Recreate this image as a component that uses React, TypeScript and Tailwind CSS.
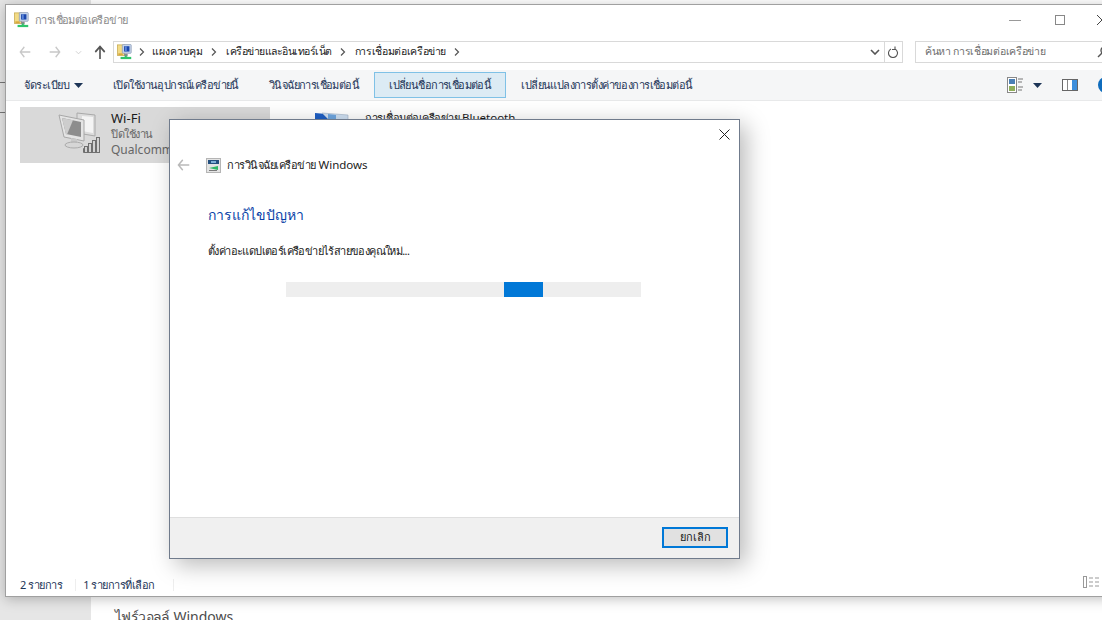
import React from "react";

const FONT = "font-['Noto_Sans','Liberation_Sans',sans-serif]";

function NetIcon({ size = 18 }: { size?: number }) {
  return (
    <svg width={size} height={size} viewBox="0 0 18 18" className="shrink-0">
      <rect x="0.500" y="1" width="8" height="12" fill="#f2db86" stroke="#c4a648" strokeWidth="0.8" />
      <rect x="1.500" y="10.500" width="5" height="2" fill="#d9a93c" />
      <rect x="6" y="0.500" width="10" height="10" rx="1" fill="#c4d3e8" stroke="#8a99b5" strokeWidth="0.8" />
      <rect x="8" y="2.500" width="6" height="6" fill="#1a46ad" />
      <rect x="9" y="2.500" width="2" height="6" fill="#5b86d8" />
      <rect x="8" y="11" width="4" height="3" fill="#8a8a8a" />
      <rect x="4" y="14.500" width="12" height="2.500" fill="#2ec46a" />
      <rect x="9" y="13" width="2" height="2" fill="#2ec46a" />
    </svg>
  );
}

function ArrowLeft({ color, w = 18 }: { color: string; w?: number }) {
  return (
    <svg width={w} height="12" viewBox="0 0 18 14" fill="none" stroke={color} strokeWidth="1.900" preserveAspectRatio="none" className="shrink-0">
      <path d="M17 7H2M8 1L2 7l6 6" />
    </svg>
  );
}

function Caret() {
  return (
    <svg width="9" height="5" viewBox="0 0 9 5" className="shrink-0">
      <path d="M0 0h9L4.500 5z" fill="#1d3557" />
    </svg>
  );
}

function Chevron() {
  return (
    <svg width="6" height="8" viewBox="0 0 6 8" fill="none" stroke="#555" strokeWidth="1.200" className="shrink-0">
      <path d="M1 0.500L4.500 4 1 7.500" />
    </svg>
  );
}

function WifiPc() {
  return (
    <svg width="46" height="42" viewBox="0 0 46 42" className="shrink-0">
      <path d="M19 1l18 2v21l-18-3z" fill="#dcdcdc" stroke="#a9a9a9" />
      <path d="M24 4l11 1v16l-11-2z" fill="#f4f4f4" />
      <path d="M1 3l25 5v21L6 25z" fill="#e4e4e4" stroke="#a8a8a8" />
      <path d="M4 6l19 4v15L8 22z" fill="#8d8d8d" />
      <path d="M4 6l11 2.300L9 22.500H8z" fill="#cdcdcd" />
      <path d="M13 26l6 1v5h-6z" fill="#c9c9c9" />
      <ellipse cx="16" cy="33" rx="9" ry="3" fill="#d6d6d6" stroke="#ababab" />
      <g fill="#d2d2d2" stroke="#6f6f6f" strokeWidth="1">
        <path d="M25.500 36.500h15v4h-15z" fill="none" />
        <rect x="26.500" y="34.500" width="3" height="6" />
        <rect x="30.500" y="31.500" width="3" height="9" />
        <rect x="34.500" y="28.500" width="3" height="12" />
        <rect x="38.500" y="25.500" width="3" height="15" />
      </g>
    </svg>
  );
}

function BtPc() {
  return (
    <svg width="36" height="14" viewBox="0 0 36 14" className="shrink-0">
      <path d="M1 1l22 2v12H1z" fill="#1f5fc4" />
      <path d="M8 1l26 2v12H22z" fill="#cfe0f3" stroke="#9db0c6" strokeWidth="0.600" />
      <path d="M14 2l8 1v12h-8z" fill="#6ea6e0" />
    </svg>
  );
}

function DiagIcon() {
  return (
    <svg width="15" height="15" viewBox="0 0 15 15" className="shrink-0">
      <rect x="0.500" y="0.500" width="14" height="14" fill="#e4e4e4" stroke="#b5b5b5" />
      <rect x="2" y="2" width="11" height="4" fill="#24507f" />
      <rect x="5" y="3" width="5" height="2" fill="#7fb0d8" />
      <path d="M3 10l9-2v4z" fill="#2fb866" />
      <rect x="3" y="12" width="8" height="1" fill="#7a7a7a" />
    </svg>
  );
}

function Cmd({ label, active }: { label: string; active?: boolean }) {
  return (
    <div
      className={
        "h-[26px] flex items-center px-[14px] whitespace-nowrap border text-[11px] tracking-[-0.58px] " +
        (active ? "bg-[#dcebf4] border-[#7fc1e6]" : "border-transparent")
      }
    >
      {label}
    </div>
  );
}

export default function App() {
  return (
    <div className={`relative w-[1102px] h-[620px] overflow-hidden bg-white ${FONT} text-[#1a1a1a]`}>
      {/* Desktop behind: settings window */}
      <div className="flex h-full">
        <div className="w-[91px] bg-[#e6e6e6]" />
        <div className="flex-1 flex flex-col justify-end pl-[24px] text-[#4b4b4b] text-[14px] leading-[20px]">
          <div className="translate-y-[7px]">
            <span className="tracking-[-0.6px]">ไฟร์วอลล์</span> Windows
          </div>
        </div>
      </div>
      <div className="absolute left-0 top-[82px] w-[5px] h-px bg-[#777]" />
      <div className="absolute left-0 top-[112px] w-[5px] h-px bg-[#777]" />

      {/* Explorer window */}
      <div className="absolute left-[5px] top-[4px] w-[1120px] h-[593px] bg-white border border-[#a0a0a0] shadow-[0_2px_12px_rgba(0,0,0,0.25)] flex flex-col">
        {/* Title */}
        <div className="h-[30px] flex items-center pl-[8px] gap-[5px] relative shrink-0">
          <NetIcon size={16} />
          <span className="text-[11px] tracking-[-0.6px] text-[#8a8a8a]">การเชื่อมต่อเครือข่าย</span>
          <div className="absolute left-[1003px] top-0 h-full flex items-center">
            <div className="w-[12px] h-px bg-[#999]" />
            <div className="ml-[34px] w-[10px] h-[10px] border border-[#888]" />
            <div className="ml-[32px] w-[10px] h-[10px]">
              <svg width="10" height="10" viewBox="0 0 10 10" stroke="#444" fill="none"><path d="M0 0l10 10M10 0L0 10" /></svg>
            </div>
          </div>
        </div>
        {/* Address */}
        <div className="h-[35px] flex items-center shrink-0 pl-[13px] pb-[1px]">
          <ArrowLeft color="#c8c8c8" w={12} />
          <div className="ml-[18px] rotate-180"><ArrowLeft color="#c8c8c8" w={12} /></div>
          <svg width="7" height="5" viewBox="0 0 8 5" fill="none" stroke="#ccc" className="ml-[14px]"><path d="M1 1l3 3 3-3" /></svg>
          <svg width="12" height="14" viewBox="0 0 14 14" fill="none" stroke="#555" strokeWidth="1.900" preserveAspectRatio="none" className="ml-[12px]"><path d="M7 14V2M1.500 7L7 1.500 12.500 7" /></svg>
          <div className="ml-[7px] w-[790px] h-[22px] border border-[#d9d9d9] flex items-center relative">
            <div className="ml-[3px]"><NetIcon size={16} /></div>
            <div className="ml-[6px] mr-[7px]"><Chevron /></div>
            <span className="text-[10.500px] tracking-[-0.1px]">แผงควบคุม</span>
            <div className="ml-[8px] mr-[9px]"><Chevron /></div>
            <span className="text-[10.500px] tracking-[-0.5px]">เครือข่ายและอินเทอร์เน็ต</span>
            <div className="ml-[8px] mr-[9px]"><Chevron /></div>
            <span className="text-[10.500px] tracking-[-0.35px]">การเชื่อมต่อเครือข่าย</span>
            <div className="ml-[8px]"><Chevron /></div>
            <div className="ml-auto flex items-center h-full">
              <svg width="10" height="6" viewBox="0 0 10 6" fill="none" stroke="#555" strokeWidth="1.600" className="mr-[4px]"><path d="M1 1l4 4 4-4" /></svg>
              <div className="w-[18px] h-full border-l border-[#d9d9d9] flex items-center justify-center">
                <svg width="11" height="12" viewBox="0 0 11 12" fill="none" stroke="#555" strokeWidth="1.100"><path d="M3 3a4.500 4.500 0 1 0 4 0M7 0.500V3.500H4" /></svg>
              </div>
            </div>
          </div>
          <div className="ml-[12px] w-[200px] h-[22px] border border-[#d9d9d9] flex items-center pl-[9px]">
            <span className="text-[10.500px] tracking-[-0.3px] text-[#6d6d6d]">ค้นหา การเชื่อมต่อเครือข่าย</span>
            <svg width="12" height="12" viewBox="0 0 12 12" fill="none" stroke="#555" strokeWidth="1.400" className="ml-auto mr-[5px]"><circle cx="7.500" cy="4.500" r="3.500" /><path d="M5 7l-4 4" /></svg>
          </div>
        </div>
        {/* Command bar */}
        <div className="h-[31px] bg-[#f5f6f7] border-b border-[#e8e9ea] flex items-center shrink-0 pl-[4px] text-[#1d3557] relative">
          <div className="flex items-center pl-[14px] pr-[15px] gap-[5px] text-[11px]"><span className="tracking-[-0.5px]">จัดระเบียบ</span> <Caret /></div>
          <Cmd label="เปิดใช้งานอุปกรณ์เครือข่ายนี้" />
          <Cmd label="วินิจฉัยการเชื่อมต่อนี้" />
          <Cmd label="เปลี่ยนชื่อการเชื่อมต่อนี้" active />
          <Cmd label="เปลี่ยนแปลงการตั้งค่าของการเชื่อมต่อนี้" />
          <div className="absolute left-[1001px] top-[7px] flex items-center">
            <svg width="16" height="16" viewBox="0 0 16 16"><rect x="0.500" y="0.500" width="9" height="15" fill="#fff" stroke="#888" /><rect x="2" y="2" width="6" height="5" fill="#4a7fb5" /><rect x="2" y="9" width="6" height="5" fill="#8fae5a" /><path d="M11 2h5M11 5h4M11 10h5M11 13h4" stroke="#777" /></svg>
            <div className="ml-[10px]"><Caret /></div>
            <svg width="16" height="12" viewBox="0 0 16 12" className="ml-[20px]"><rect x="0.500" y="0.500" width="15" height="11" fill="#fff" stroke="#666" /><rect x="10" y="1" width="5" height="10" fill="#3d8fdc" /><rect x="5" y="1" width="1" height="10" fill="#888" /></svg>
            <div className="ml-[20px] w-[16px] h-[16px] rounded-full bg-[#0f6cbd]" />
          </div>
        </div>
        {/* Content */}
        <div className="flex-1 relative pl-[14px] pt-[6px]">
          <div className="w-[250px] h-[56px] bg-[#d9d9d9] flex pl-[38px] pt-[3px]">
            <div className="pt-[2px]"><WifiPc /></div>
            <div className="text-[12px] leading-[16px] pl-[7px]">
              <div className="text-[13px]">Wi-Fi</div>
              <div className="text-[#666] text-[11px] tracking-[-0.5px]">ปิดใช้งาน</div>
              <div className="text-[#666]">Qualcomm</div>
            </div>
          </div>
          <div className="absolute left-[308px] top-[11px] flex gap-[15px]">
            <BtPc />
            <span className="text-[11.500px] leading-[14px] -mt-[1px]">
              <span className="text-[11px] tracking-[-0.5px]">การเชื่อมต่อเครือข่าย</span> Bluetooth
            </span>
          </div>
        </div>
        {/* Status */}
        <div className="h-[24px] flex items-center pl-[14px] pt-[2px] text-[11px] tracking-[-0.5px] text-[#1d3557] shrink-0 relative">
          <span>2 รายการ</span>
          <div className="w-px h-[12px] bg-[#eeeeee] ml-[13px] mr-[7px]" />
          <span>1 รายการที่เลือก</span>
          <div className="w-px h-[12px] bg-[#eeeeee] ml-[18px]" />
          <svg width="17" height="12" viewBox="0 0 17 12" className="absolute left-[1077px] top-[4px]" fill="none" stroke="#999"><rect x="0.500" y="0.500" width="3" height="11" /><path d="M6 2h4M12 2h4M6 6h4M12 6h4M6 10h4M12 10h4" /></svg>
        </div>
      </div>

      {/* Dialog */}
      <div className="absolute left-[169px] top-[119px] w-[571px] h-[440px] bg-white border border-[#707b8c] shadow-[6px_6px_22px_rgba(0,0,0,0.28)] flex flex-col">
        <div className="h-[24px] relative shrink-0">
          <svg width="11" height="11" viewBox="0 0 11 11" stroke="#222" fill="none" className="absolute left-[549px] top-[9px]"><path d="M0.500 0.500l10 10M10.500 0.500l-10 10" /></svg>
        </div>
        <div className="h-[42px] flex items-center pl-[7px] shrink-0">
          <ArrowLeft color="#b9b9b9" w={13} />
          <div className="ml-[16px]"><DiagIcon /></div>
          <span className="ml-[6px] text-[11.500px] text-[#222]">
            <span className="text-[11px] tracking-[-0.5px]">การวินิจฉัยเครือข่าย</span> Windows
          </span>
        </div>
        <div className="pl-[38px] pt-[19px] flex-1">
          <div className="text-[14px] leading-[20px] text-[#0a3fa8]">การแก้ไขปัญหา</div>
          <div className="mt-[17px] text-[11px] tracking-[-0.6px] leading-[18px]">ตั้งค่าอะแดปเตอร์เครือข่ายไร้สายของคุณใหม่...</div>
          <div className="mt-[22px] ml-[78px] w-[355px] h-[15px] bg-[#eeeeee] pl-[218px]">
            <div className="w-[39px] h-full bg-[#0178d7]" />
          </div>
        </div>
        <div className="h-[41px] bg-[#f0f0f0] border-t border-[#dfdfdf] flex items-center justify-end pr-[11px] pb-[2px] shrink-0">
          <div className="w-[66px] h-[21px] bg-[#e1e1e1] border-2 border-[#0078d7] flex items-center justify-center text-[11px]">ยกเลิก</div>
        </div>
      </div>
    </div>
  );
}
